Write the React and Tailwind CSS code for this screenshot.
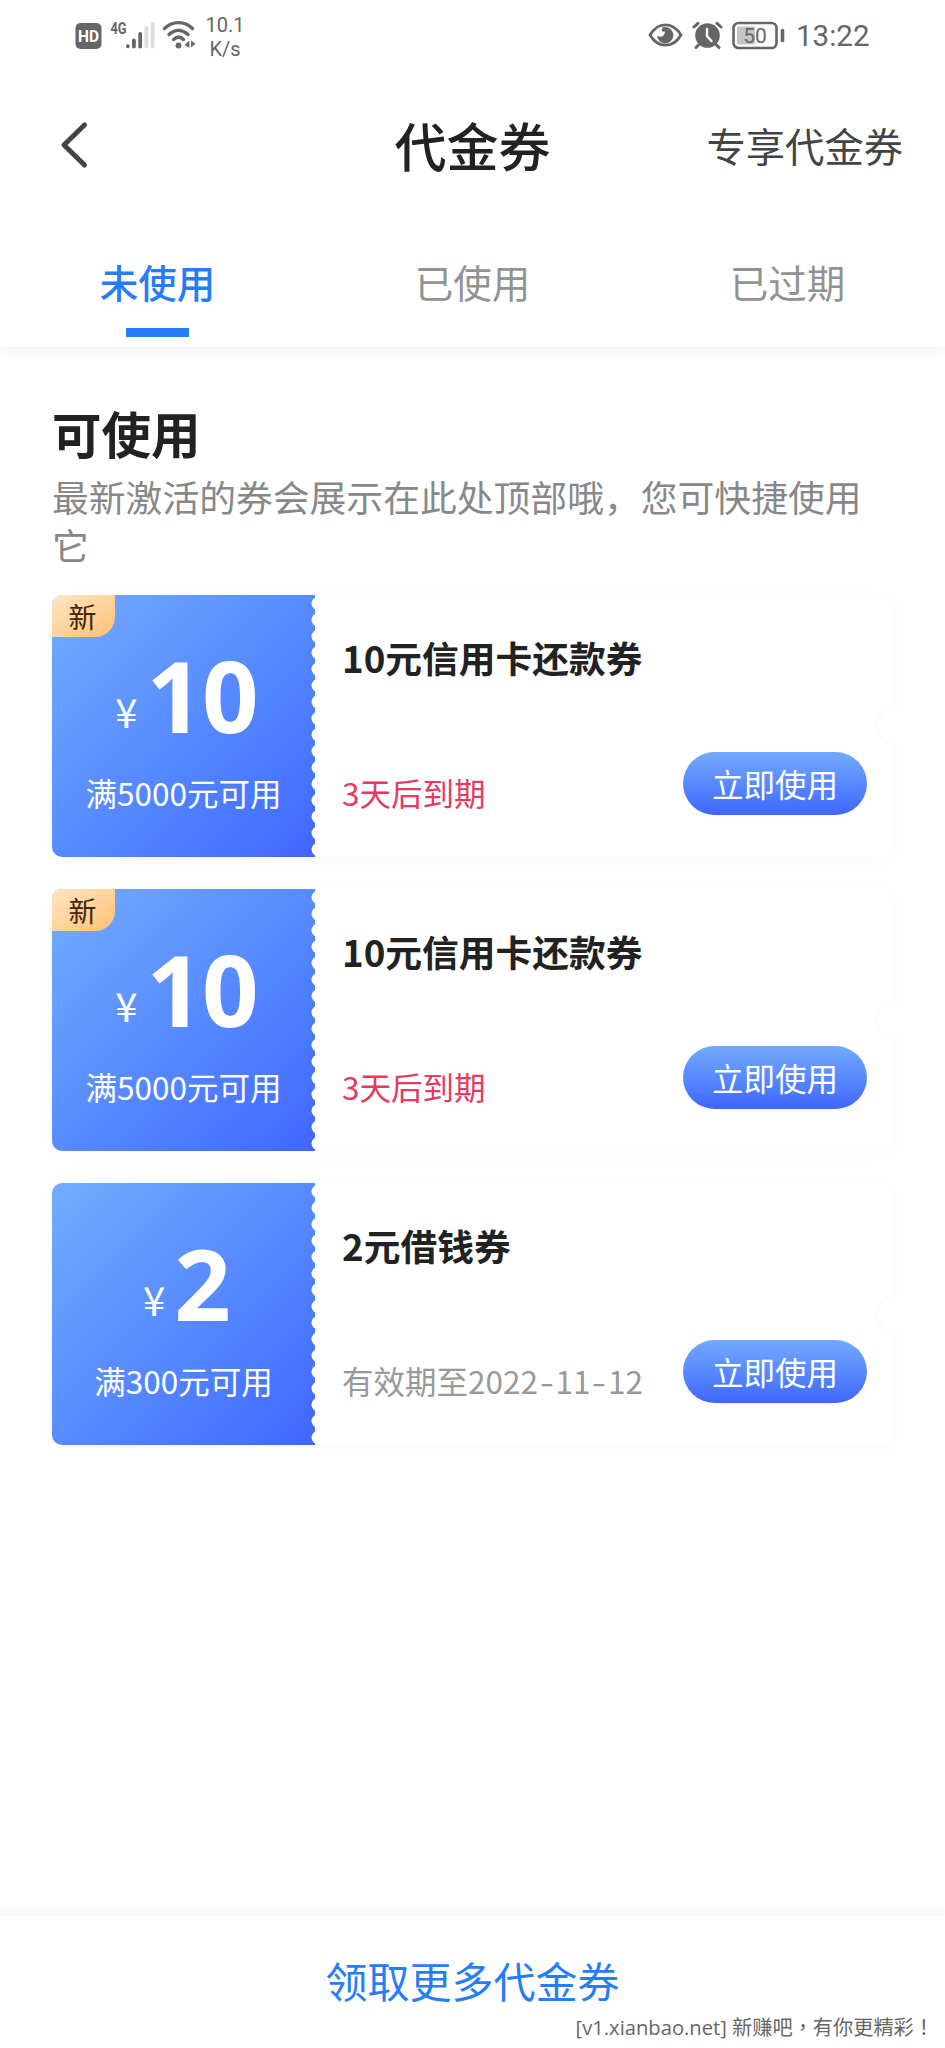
import { clsx } from 'clsx';

const coupons = [
    { id: 1, isNew: true, amount: '10', condition: '满5000元可用', title: '10元信用卡还款券', expiry: '3天后到期', urgent: true },
    { id: 2, isNew: true, amount: '10', condition: '满5000元可用', title: '10元信用卡还款券', expiry: '3天后到期', urgent: true },
    { id: 3, isNew: false, amount: '2', condition: '满300元可用', title: '2元借钱券', expiry: '有效期至2022-11-12', urgent: false },
];

const tabs = ['未使用', '已使用', '已过期'];

function StatusBar() {
    return (
        <div className="flex h-[70px] items-start justify-between pl-[75px] pr-[76px] font-['Roboto',sans-serif] text-[#666]">
            <div className="flex items-start">
                {/* HD, sinyal, wifi */}
                <svg className="mt-[22px]" width="27" height="28" viewBox="0 0 27 28">
                    <rect x="0.5" y="1" width="26" height="26" rx="5" fill="#666" />
                    <text x="13.5" y="20" textAnchor="middle" fontSize="17" fontWeight="700" fill="#fff" textLength="21" lengthAdjust="spacingAndGlyphs">HD</text>
                </svg>
                <svg className="ml-[8px] mt-[20px]" width="46" height="30" viewBox="0 0 46 30">
                    <text x="0.5" y="13.5" fontSize="16.5" fontWeight="700" fill="#666" textLength="16" lengthAdjust="spacingAndGlyphs">4G</text>
                    <g strokeWidth="3.8" strokeLinecap="round" stroke="#666">
                        <path d="M17.8 26.2v.1M23.9 20.5v6M30.2 14v12.5" />
                        <path d="M36.4 8v18.5M42.6 4v22.5" stroke="#dcdcdc" />
                    </g>
                </svg>
                <svg className="ml-[6px] mt-[20px]" width="34" height="30" viewBox="0 0 34 30" fill="none" stroke="#666" strokeWidth="3.4" strokeLinecap="round">
                    <path d="M2.5 8.5C11 .6 22 .6 30.5 8.5" />
                    <path d="M7 14.5C13 9 20 9 26 14.5" />
                    <path d="M11.5 19.5c3.4-3 7-3 10 0" />
                    <circle cx="16.5" cy="25.5" r="2.9" fill="#666" stroke="none" />
                    <path d="M27.4 20.5v7.5l-4.6-3.2zM29 20.5v7l4.5-3.700z" fill="#666" stroke="none" />
                </svg>
                <div className="ml-[9px] mt-[14px] w-[40px] text-center text-[20px] leading-[23.5px]">
                    <div>10.1</div>
                    <div>K/s</div>
                </div>
            </div>
            <div className="flex items-start">
                {/* mata, alarm, baterai */}
                <svg className="mt-[22px]" width="35" height="26" viewBox="0 0 35 26">
                    <path d="M2 13C10-.6 25-.6 33 13 25 26.6 10 26.6 2 13z" fill="none" stroke="#666" strokeWidth="2.8" strokeLinejoin="round" />
                    <circle cx="17.2" cy="13.2" r="8.2" fill="#666" />
                    <circle cx="12.2" cy="10.2" r="4.6" fill="#fff" />
                    <circle cx="15.5" cy="8" r="1.8" fill="#666" />
                </svg>
                <svg className="ml-[9px] mt-[21px]" width="31" height="29" viewBox="0 0 31 29">
                    <circle cx="15.5" cy="14.5" r="12.3" fill="#666" />
                    <path d="M2 6 6 2.3M29 6 25 2.3M7 23.5l-3 3M24 23.5l3 3" stroke="#666" strokeWidth="3" strokeLinecap="round" />
                    <path d="M15 8v7l4.5 5" fill="none" stroke="#fff" strokeWidth="2.4" strokeLinecap="round" />
                </svg>
                <svg className="ml-[9px] mt-[21px]" width="54" height="29" viewBox="0 0 54 29">
                    <rect x="1.5" y="2" width="43" height="25" rx="5" fill="none" stroke="#666" strokeWidth="2.6" />
                    <rect x="5" y="5.5" width="18" height="18" rx="1.5" fill="#c4c4c4" />
                    <path d="M50.5 9.5v10" stroke="#666" strokeWidth="3.6" strokeLinecap="round" />
                    <text x="23" y="22" textAnchor="middle" fontSize="21" fill="#666">50</text>
                </svg>
                <div className="ml-[10px] mt-[18px] w-[73px] whitespace-nowrap text-[29.5px] leading-[37px]">13:22</div>
            </div>
        </div>
    );
}

function Expiry({ text }) {
    return text.split('-').map((part, i) => (
        <span key={i}>
            {i > 0 && <span className="inline-block w-[17.5px] scale-x-130 text-center">-</span>}
            {part}
        </span>
    ));
}

function CouponCard({ coupon }) {
    return (
        <div className="relative flex h-[262px] w-[841px] rounded-[10px] bg-white shadow-[0_3px_18px_rgba(0,0,0,0.025)]">
            <div className="relative flex w-[263px] flex-col items-center overflow-hidden rounded-l-[10px] bg-linear-to-br from-[#74acff] to-[#4166ff] text-white">
                {coupon.isNew && (
                    <div className="absolute left-0 top-0 flex h-[42px] w-[63px] items-center justify-center rounded-br-[20px] bg-linear-to-br from-[#ffe6c4] to-[#ffc071] text-[28px] text-[#42250b]">
                        <span className="-ml-[2px] -mt-[1px]">新</span>
                    </div>
                )}
                <div className="mt-[40px] flex h-[120px] items-baseline pl-[6px] leading-[120px]">
                    <span className="mr-[9px] -translate-y-[5px] text-[40px]">¥</span>
                    <span className="font-['Noto_Sans',sans-serif] text-[99px] font-bold tracking-[-1px]">{coupon.amount}</span>
                </div>
                <div className="mt-[15px] text-[31.5px] leading-[44px]">{coupon.condition}</div>
                {/* tepi bergerigi */}
                <svg className="absolute right-0 top-0" width="4" height="262" viewBox="0 0 4 262">
                    {Array.from({ length: 16 }, (_, i) => (
                        <circle key={i} cx="7" cy={8.5 + i * 16.4} r="6.5" fill="#fff" />
                    ))}
                </svg>
            </div>
            <div className="flex flex-1 flex-col pl-[27px] pr-[26px]">
                <h3 className="mt-[36px] text-[36.75px] font-bold leading-[52px] text-[#222]">{coupon.title}</h3>
                <div className="mt-[69px] flex items-start justify-between">
                    <span className={clsx('mt-[18px] whitespace-nowrap text-[31.5px] leading-[44px]', coupon.urgent ? 'text-[#e63a5f]' : 'text-[#999]')}>
                        <Expiry text={coupon.expiry} />
                    </span>
                    <button className="h-[63px] w-[184px] rounded-full bg-linear-to-b from-[#74a9ff] to-[#4166ff] text-[31.5px] leading-[59px] text-white">
                        立即使用
                    </button>
                </div>
            </div>
            {/* lekukan kanan */}
            <div className="absolute -right-[20px] top-[112px] h-[38px] w-[38px] rounded-full bg-white shadow-[inset_2px_0_4px_rgba(0,0,0,0.025)]" />
        </div>
    );
}

export default function App() {
    return (
        <div className="relative flex h-[2048px] w-[945px] flex-col overflow-hidden bg-white font-['Noto_Sans_CJK_SC',sans-serif]">
            <header className="relative z-10 h-[347px] bg-white shadow-[0_3px_12px_rgba(0,0,0,0.06)]">
                <StatusBar />
                <div className="grid h-[150px] grid-cols-3 items-center pl-[58px] pr-[42px]">
                    <svg width="32" height="50" viewBox="0 0 32 50" fill="none" stroke="#444" strokeWidth="5" strokeLinecap="round" strokeLinejoin="round">
                        <path d="M26.5 5 6 25l20.5 20" />
                    </svg>
                    <h1 className="-ml-[16px] text-center text-[52px] font-medium leading-[70px] text-[#222]">代金券</h1>
                    <div className="whitespace-nowrap text-right text-[39.3px] leading-[56px] text-[#444]">专享代金券</div>
                </div>
                <nav className="grid h-[127px] grid-cols-3">
                    {tabs.map((tab, i) => (
                        <div key={tab} className={clsx('flex flex-col items-center text-[38.5px] leading-[56px]', i === 0 ? 'font-medium text-[#267df8]' : 'text-[#929292]')}>
                            <span className="mt-[33px]">{tab}</span>
                            {i === 0 && <span className="mt-[19px] h-[9px] w-[63px] bg-[#267df8]" />}
                        </div>
                    ))}
                </nav>
            </header>

            <main className="flex-1 px-[52px] pt-[51px]">
                <h2 className="text-[49.5px] font-bold leading-[70px] text-[#222]">可使用</h2>
                <p className="mt-[5px] w-[815px] text-[36.8px] leading-[47.5px] text-[#888]">
                    最新激活的券会展示在此处顶部哦，您可快捷使用它
                </p>
                <div className="mt-[27px] flex flex-col gap-[32px]">
                    {coupons.map((coupon) => (
                        <CouponCard key={coupon.id} coupon={coupon} />
                    ))}
                </div>
            </main>

            <footer className="flex h-[132px] flex-col items-center bg-white shadow-[0_-3px_14px_rgba(0,0,0,0.06)]">
                <a className="mt-[34px] text-[42px] leading-[60px] text-[#267df8]">领取更多代金券</a>
            </footer>
            <div className="absolute bottom-[7px] right-[11px] whitespace-nowrap font-['Open_Sans','Noto_Sans_CJK_TC',sans-serif] text-[20.2px] leading-[28px] text-[#666]">
                [v1.xianbao.net] 新赚吧，有你更精彩！
            </div>
        </div>
    );
}
